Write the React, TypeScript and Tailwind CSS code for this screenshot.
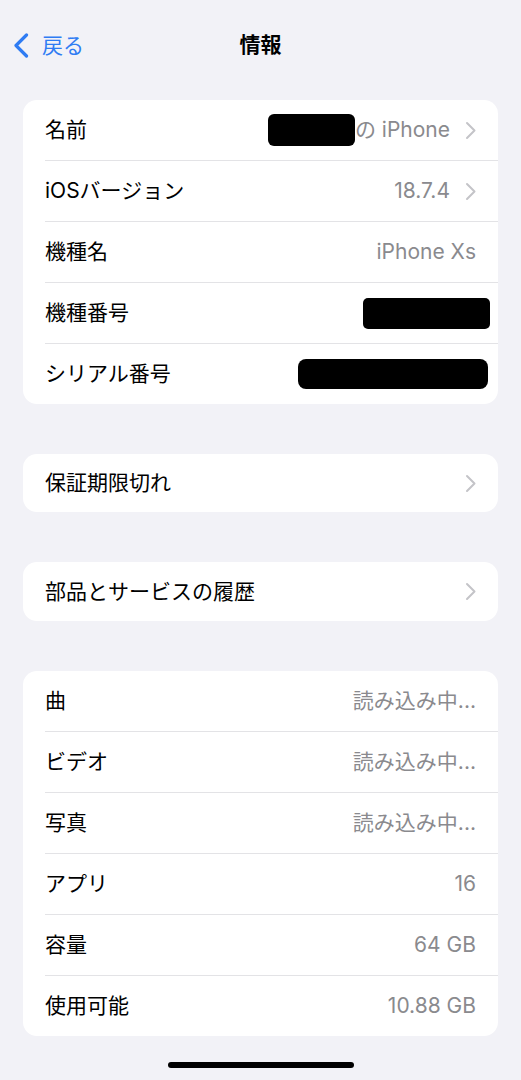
import React from 'react';

type Row = {
  label: string;
  value?: React.ReactNode;
  chevron?: boolean;
};

function Chevron() {
  return (
    <svg className="w-[11px] h-[19px] shrink-0" viewBox="0 0 11 19" fill="none">
      <path d="M2 2l7.5 7.5L2 17" stroke="#c4c4c8" strokeWidth={2} strokeLinecap="round" strokeLinejoin="round" />
    </svg>
  );
}

function Redact({ className }: { className: string }) {
  return <span className={'block bg-black ' + className} />;
}

function Card({ rows, height = 'h-[60px]' }: { rows: Row[]; height?: string }) {
  return (
    <div className="mx-[23px] bg-white rounded-[14px] overflow-hidden">
      {rows.map((row, i) => (
        <div key={row.label} className="pl-[22px]">
          {i > 0 && <div className="h-px bg-[#e3e3e6]" />}
          <div className={'flex items-center justify-between pr-[22px] ' + height}>
            <span className="text-[21px] text-black">{row.label}</span>
            <div className="flex items-center gap-[15px] text-[21px] text-[#8a8a8e]">
              {row.value}
              {row.chevron && <Chevron />}
            </div>
          </div>
        </div>
      ))}
    </div>
  );
}

export default function App() {
  const font = { fontFamily: 'Inter, "Noto Sans CJK JP", sans-serif' };

  const info: Row[] = [
    {
      label: '名前',
      value: (
        <span className="flex items-center">
          <Redact className="w-[87px] h-[32px] rounded-[6px]" />
          <span>の iPhone</span>
        </span>
      ),
      chevron: true,
    },
    { label: 'iOSバージョン', value: '18.7.4', chevron: true },
    { label: '機種名', value: 'iPhone Xs' },
    { label: '機種番号', value: <Redact className="w-[127px] h-[31px] rounded-[5px] -mr-[14px]" /> },
    { label: 'シリアル番号', value: <Redact className="w-[190px] h-[30px] rounded-[8px] -mr-[12px]" /> },
  ];

  const media: Row[] = [
    { label: '曲', value: '読み込み中...' },
    { label: 'ビデオ', value: '読み込み中...' },
    { label: '写真', value: '読み込み中...' },
    { label: 'アプリ', value: '16' },
    { label: '容量', value: '64 GB' },
    { label: '使用可能', value: '10.88 GB' },
  ];

  return (
    <div className="w-[521px] h-[1080px] bg-[#f2f2f7] overflow-hidden" style={font}>
      {/* Nav bar */}
      <div className="relative h-[100px] flex items-start pt-[33px]">
        <div className="flex items-center pl-[13px] text-[#2f7cf3]">
          <svg className="w-[16px] h-[25px]" viewBox="0 0 16 25" fill="none">
            <path d="M13.5 2L3 12.5 13.5 23" stroke="#2f7cf3" strokeWidth={3.2} strokeLinecap="round" strokeLinejoin="round" />
          </svg>
          <span className="ml-[13px] text-[21px] leading-[24px]">戻る</span>
        </div>
        <div className="absolute left-0 right-0 top-[33px] text-center text-[21px] leading-[24px] font-bold text-black">
          情報
        </div>
      </div>

      <Card rows={info} />

      <div className="mt-[50px]">
        <Card rows={[{ label: '保証期限切れ', chevron: true }]} height="h-[58px]" />
      </div>

      <div className="mt-[50px]">
        <Card rows={[{ label: '部品とサービスの履歴', chevron: true }]} height="h-[59px]" />
      </div>

      <div className="mt-[50px]">
        <Card rows={media} />
      </div>

      {/* Home indicator */}
      <div className="flex justify-center mt-[26px]">
        <div className="w-[186px] h-[6px] rounded-full bg-black" />
      </div>
    </div>
  );
}
